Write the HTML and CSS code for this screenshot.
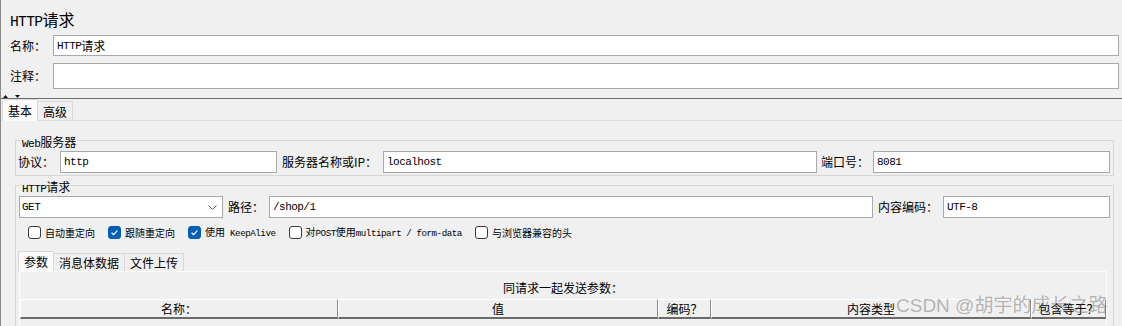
FILE: index.html
```html
<!DOCTYPE html>
<html lang="zh-CN">
<head>
<meta charset="utf-8">
<title>HTTP请求</title>
<link rel="stylesheet" href="styles.css">
</head>
<body>
<div class="app">
  <header class="top">
    <div class="title"><span class="m">HTTP</span>请求</div>
    <div class="row name-row">
      <label class="lbl">名称：</label>
      <div class="input"><span class="m">HTTP</span>请求</div>
    </div>
    <div class="row comment-row">
      <label class="lbl">注释：</label>
      <div class="input"></div>
    </div>
  </header>
  <div class="arrows">
    <svg width="22" height="4" viewBox="0 0 22 4"><path d="M2 4 L4.5 1 L7 4 Z" fill="#111"/><path d="M14 1 L19 1 L16.5 4 Z" fill="#111"/></svg>
  </div>
  <div class="split"></div>
  <nav class="tabs outer-tabs">
    <span class="tab active">基本</span>
    <span class="tab">高级</span>
  </nav>
  <section class="tab-body">
    <fieldset class="group">
      <legend><span class="m">Web</span>服务器</legend>
      <div class="web-grid">
        <label class="lbl">协议：</label>
        <div class="input"><span class="m">http</span></div>
        <label class="lbl pad5">服务器名称或IP：</label>
        <div class="input"><span class="m">localhost</span></div>
        <label class="lbl pad4">端口号：</label>
        <div class="input"><span class="m">8081</span></div>
      </div>
    </fieldset>
    <fieldset class="group http-group">
      <legend><span class="m">HTTP</span>请求</legend>
      <div class="http-grid">
        <div class="select"><span class="m">GET</span>
          <svg width="9" height="5" viewBox="0 0 9 5"><path d="M0.5 0.5 L4.5 4.5 L8.5 0.5" stroke="#5a5a5a" stroke-width="1" fill="none"/></svg>
        </div>
        <label class="lbl pad5">路径：</label>
        <div class="input"><span class="m">/shop/1</span></div>
        <label class="lbl pad5">内容编码：</label>
        <div class="input"><span class="m">UTF-8</span></div>
      </div>
      <div class="checks">
        <div class="check"><span class="cb"></span><span>自动重定向</span></div>
        <div class="check"><span class="cb on"><svg width="11" height="11" viewBox="0 0 11 11"><path d="M2.6 5.8 L4.6 7.7 L8.4 3.6" stroke="#fff" stroke-width="1.2" fill="none"/></svg></span><span>跟随重定向</span></div>
        <div class="check"><span class="cb on"><svg width="11" height="11" viewBox="0 0 11 11"><path d="M2.6 5.8 L4.6 7.7 L8.4 3.6" stroke="#fff" stroke-width="1.2" fill="none"/></svg></span><span>使用<span class="m"> KeepAlive</span></span></div>
        <div class="check"><span class="cb"></span><span>对<span class="m">POST</span>使用<span class="m">multipart / form-data</span></span></div>
        <div class="check"><span class="cb"></span><span>与浏览器兼容的头</span></div>
      </div>
      <nav class="tabs inner-tabs">
        <span class="tab active">参数</span>
        <span class="tab">消息体数据</span>
        <span class="tab">文件上传</span>
      </nav>
      <div class="panel">
        <div class="caption">同请求一起发送参数：</div>
        <div class="thead">
          <div class="th">名称：</div>
          <div class="th">值</div>
          <div class="th">编码？</div>
          <div class="th">内容类型</div>
          <div class="th">包含等于？</div>
        </div>
        <div class="tbody"></div>
      </div>
    </fieldset>
  </section>
  <div class="watermark">CSDN @胡宇的成长之路</div>
</div>
</body>
</html>
```
FILE: styles.css
```css
* { box-sizing: border-box; }
html, body { margin: 0; padding: 0; }
body {
  width: 1122px;
  height: 326px;
  overflow: hidden;
  background: #f0f0f0;
  color: #000;
  font-family: "Noto Sans CJK SC", "Liberation Sans", sans-serif;
  font-size: 12px;
}
.app {
  position: relative;
  height: 326px;
  border-left: 1px solid #8a8a8a;
}
.m {
  font-family: "Liberation Mono", "Noto Sans CJK SC", monospace;
  font-size: 0.92em;
  letter-spacing: -0.05em;
}

/* top area */
.top { padding: 8px 3px 0 9px; }
.title { font-size: 16px; line-height: 22px; height: 22px; margin-bottom: 5px; }
.row {
  display: grid;
  grid-template-columns: 43px 1fr;
  align-items: stretch;
}
.name-row { height: 21px; margin-bottom: 7px; }
.comment-row { height: 26px; }
.lbl {
  display: flex;
  align-items: center;
  white-space: nowrap;
  line-height: 14px;
}
.pad5 { padding-left: 5px; }
.pad4 { padding-left: 4px; }
.input {
  display: flex;
  align-items: center;
  background: #fff;
  border: 1px solid #a9a9a9;
  padding: 0 3px;
  white-space: nowrap;
  overflow: hidden;
}
.arrows { height: 9px; display: flex; align-items: flex-end; }
.arrows svg { display: block; }
.split { height: 1px; background: #6d6d6d; }

/* tabs */
.tabs {
  display: flex;
  align-items: flex-end;
}
.tab {
  display: flex;
  align-items: center;
  justify-content: center;
  background: #f0f0f0;
  border: 1px solid #d9d9d9;
  border-bottom: none;
  margin-left: -1px;
  padding: 0 5px;
  white-space: nowrap;
}
.tab.active {
  background: #fafafa;
  position: relative;
  z-index: 1;
}
.outer-tabs {
  height: 22px;
  padding-left: 2px;
  border-bottom: 1px solid #dcdcdc;
}
.outer-tabs .tab { height: 19px; }
.outer-tabs .tab.active { height: 22px; margin-bottom: -1px; }

/* main tab body */
.tab-body { padding: 10px 8px 0 14px; }
.group {
  margin: 0;
  min-width: 0;
  border: 1px solid #d6d6d6;
  padding: 2px 3px 2px 2px;
}
.group legend {
  padding: 4px 1px 0;
  margin-left: 3px;
  line-height: 14px;
  height: 18px;
}
.web-grid {
  display: grid;
  grid-template-columns: 42px 217px 106px 434px 56px 1fr;
  height: 22px;
}
.http-grid {
  display: grid;
  grid-template-columns: 204px 46px 604px 70px 1fr;
  height: 22px;
  margin-left: 1px;
}
.select {
  display: flex;
  align-items: center;
  justify-content: space-between;
  background: #fff;
  border: 1px solid #a9a9a9;
  padding: 0 5px 0 2px;
}
.select svg { display: block; }

/* checkboxes */
.checks {
  display: flex;
  align-items: center;
  gap: 13px;
  height: 13px;
  margin: 8px 0 0 10px;
  font-size: 10px;
}
.check { display: flex; align-items: center; gap: 4px; white-space: nowrap; line-height: 13px; }
.cb {
  width: 13px;
  height: 13px;
  border: 1px solid #3a3a3a;
  border-radius: 3px;
  background: #fff;
  display: flex;
  align-items: center;
  justify-content: center;
}
.cb.on { background: #005fb8; border-color: #005fb8; }
.cb svg { display: block; }

/* inner tabs and table */
.inner-tabs { height: 20px; margin: 12px 0 0 1px; }
.inner-tabs .tab { height: 18px; }
.inner-tabs .tab.active { height: 20px; }
.panel {
  margin: 0 3px 0 1px;
  border: 1px solid #fbfbfb;
  border-bottom: none;
}
.caption {
  height: 27px;
  padding-top: 8px;
  line-height: 16px;
  text-align: center;
}
.thead {
  display: grid;
  grid-template-columns: 318px 320px 53px 320px 1fr;
  height: 20px;
}
.th {
  background: #f0f0f0;
  border-top: 1px solid #fff;
  border-left: 1px solid #fff;
  border-right: 1px solid #8e8e8e;
  border-bottom: 2px solid #6a6a6a;
  text-align: center;
  line-height: 17px;
  white-space: nowrap;
  overflow: hidden;
}
.tbody { height: 30px; }

.watermark {
  position: absolute;
  left: 895px;
  top: 294px;
  font-family: "Liberation Sans", "Noto Sans CJK SC", sans-serif;
  font-size: 19px;
  line-height: 24px;
  color: rgba(90, 90, 90, 0.42);
  white-space: nowrap;
  pointer-events: none;
}
```
